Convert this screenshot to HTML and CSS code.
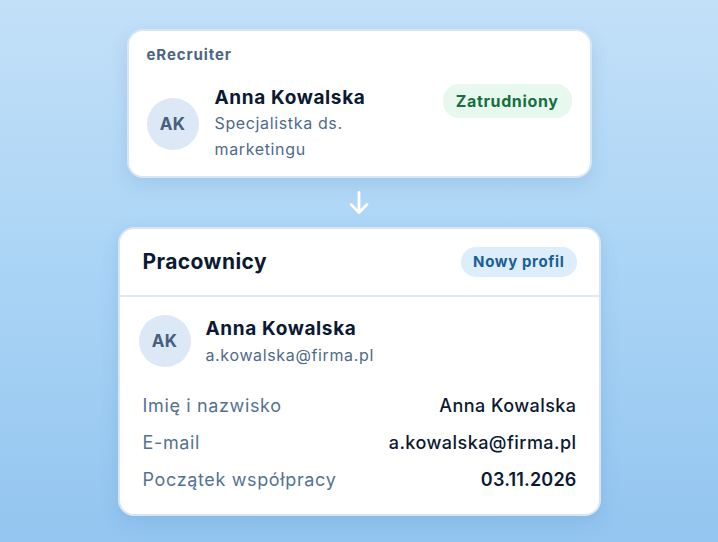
FILE: index.html
```html
<!DOCTYPE html>
<html lang="pl">
  <head>
    <meta charset="UTF-8" />
    <meta name="viewport" content="width=device-width, initial-scale=1.0" />
    <title>eRecruiter → Pracownicy</title>
    <link rel="stylesheet" href="styles.css">
  </head>
  <body>
    <main class="flow">
      <div class="card source">
        <p class="source-name">eRecruiter</p>
        <div class="person">
          <div class="avatar">AK</div>
          <div class="person-text">
            <h2>Anna Kowalska</h2>
            <p>Specjalistka ds.<br />marketingu</p>
          </div>
          <span class="badge badge-green">Zatrudniony</span>
        </div>
      </div>

      <div class="arrow">
        <svg width="26" height="26" viewBox="0 0 26 26" fill="none" stroke="#fff" stroke-width="2.8" stroke-linecap="round" stroke-linejoin="round">
          <path d="M13 2.5v20" />
          <path d="M5 14.5l8 8 8-8" />
        </svg>
      </div>

      <div class="card target">
        <div class="target-head">
          <h1>Pracownicy</h1>
          <span class="badge badge-blue">Nowy profil</span>
        </div>
        <div class="target-body">
          <div class="person">
            <div class="avatar">AK</div>
            <div class="person-text">
              <h2>Anna Kowalska</h2>
              <p>a.kowalska@firma.pl</p>
            </div>
          </div>
          <dl class="fields">
            <div class="field">
              <dt>Imię i nazwisko</dt>
              <dd>Anna Kowalska</dd>
            </div>
            <div class="field">
              <dt>E-mail</dt>
              <dd>a.kowalska@firma.pl</dd>
            </div>
            <div class="field">
              <dt>Początek współpracy</dt>
              <dd class="date">03.11.2026</dd>
            </div>
          </dl>
        </div>
      </div>
    </main>
  </body>
</html>
```

FILE: styles.css
```css
* {
  box-sizing: border-box;
}

body {
  margin: 0;
  min-height: 542px;
  font-family: Inter, "Open Sans", sans-serif;
  letter-spacing: 0.04em;
  color: #0b1a33;
  background: linear-gradient(180deg, #c3e0f8 0%, #aad4f5 50%, #93c5f0 100%);
}

.flow {
  display: flex;
  flex-direction: column;
  align-items: center;
  padding-top: 29px;
}

.card {
  background: #fff;
  border: 2px solid #d6e6f5;
  border-radius: 16px;
  box-shadow: 0 6px 18px rgba(60, 120, 180, 0.18);
}

h1,
h2,
p {
  margin: 0;
}

/* top card */
.source {
  width: 465px;
  padding: 14px 18px 14px;
}

.source-name {
  font-size: 15px;
  font-weight: 700;
  letter-spacing: 0.06em;
  color: #4b6684;
  line-height: 20px;
}

.person {
  display: flex;
  align-items: center;
  gap: 16px;
  margin-top: 21px;
}

.avatar {
  width: 52px;
  height: 52px;
  flex-shrink: 0;
  border-radius: 50%;
  background: #dce8f5;
  color: #46607e;
  font-size: 17px;
  font-weight: 700;
  letter-spacing: 0.02em;
  display: flex;
  align-items: center;
  justify-content: center;
}

.person-text {
  flex: 1;
}

.person-text h2 {
  font-size: 19px;
  font-weight: 700;
  line-height: 24px;
}

.person-text p {
  font-size: 16px;
  color: #4f6b8b;
  line-height: 26px;
}

.badge {
  border-radius: 16px;
  font-weight: 700;
  white-space: nowrap;
}

.badge-green {
  align-self: flex-start;
  margin-top: -2px;
  padding: 7px 13px;
  font-size: 16px;
  line-height: 20px;
  background: #e7f8ee;
  color: #16703f;
}

.badge-blue {
  padding: 6px 12px;
  font-size: 15px;
  line-height: 18px;
  background: #dcedfb;
  color: #1b5f93;
}

.arrow {
  height: 49px;
  display: flex;
  align-items: center;
  justify-content: center;
}

/* bottom card */
.target {
  width: 483px;
}

.target-head {
  display: flex;
  justify-content: space-between;
  align-items: center;
  padding: 17px 22px 17px 23px;
  border-bottom: 2px solid #e1e9f2;
}

.target-head h1 {
  font-size: 21px;
  font-weight: 700;
  letter-spacing: 0.02em;
  line-height: 32px;
}

.target-body {
  padding: 18px 22px 21px 23px;
}

.target-body .person {
  margin: 0 0 0 -4px;
  gap: 15px;
}

.target-body .person-text p {
  line-height: 22px;
  margin-top: 3px;
}

.fields {
  margin: 26px 0 0;
}

.field {
  display: flex;
  justify-content: space-between;
  align-items: center;
  font-size: 18px;
  line-height: 26px;
  margin-bottom: 11px;
}

.field:last-child {
  margin-bottom: 0;
}

.field dt {
  color: #557293;
}

.field dd {
  margin: 0;
  color: #0b1a33;
  font-weight: 500;
  letter-spacing: 0.025em;
}

.field dd.date {
  font-weight: 600;
  letter-spacing: 0.01em;
}
```
